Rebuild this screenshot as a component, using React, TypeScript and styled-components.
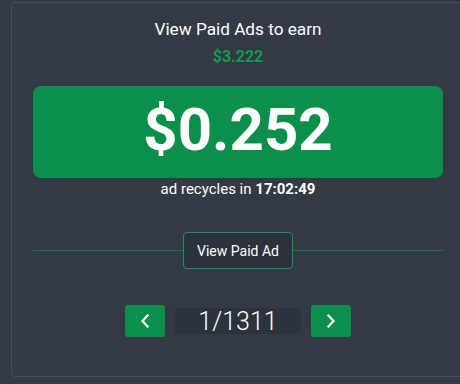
import styled, { createGlobalStyle } from 'styled-components';

const GlobalStyle = createGlobalStyle`
  html, body {
    margin: 0;
    padding: 0;
    background-color: #343a44;
    font-family: Roboto, "Liberation Sans", sans-serif;
    overflow: hidden;
  }
`;

const Panel = styled.div`
  box-sizing: border-box;
  width: 454px;
  height: 375px;
  margin: 2px 0 0 11px;
  padding: 15px 21px 0;
  border: 1px solid #464d58;
  border-radius: 4px;
  display: flex;
  flex-direction: column;
  align-items: stretch;
  color: #ffffff;
`;

const Title = styled.div`
  font-size: 17.2px;
  line-height: 22px;
  text-align: center;
`;

const Earn = styled.div`
  margin-top: 7px;
  font-size: 16px;
  line-height: 1.2;
  font-weight: 700;
  color: #0f9a50;
  text-align: center;
`;

const AmountBox = styled.div`
  margin-top: 20px;
  height: 92px;
  border-radius: 8px;
  background-color: #0c8f4a;
  display: flex;
  align-items: center;
  justify-content: center;
  padding-bottom: 4px;
  box-sizing: border-box;
`;

const Amount = styled.div`
  font-size: 60px;
  line-height: 1;
  font-weight: 700;
  color: #ffffff;
`;

const Recycle = styled.div`
  margin-top: 2px;
  font-size: 15px;
  line-height: 1.2;
  text-align: center;

  b {
    font-weight: 700;
  }
`;

const DividerRow = styled.div`
  margin-top: 34px;
  display: flex;
  align-items: center;
`;

const Line = styled.div`
  flex: 1;
  height: 1px;
  background-color: #1b7446;
`;

const ViewButton = styled.button`
  box-sizing: border-box;
  width: 110px;
  height: 37px;
  border: 1px solid #0e9a50;
  border-radius: 4px;
  background-color: #2c323b;
  color: #ffffff;
  font-family: inherit;
  font-size: 14px;
  cursor: pointer;
`;

const Pager = styled.div`
  margin-top: 36px;
  display: flex;
  align-items: center;
  justify-content: center;
  gap: 10px;
`;

const PageButton = styled.button`
  width: 40px;
  height: 32px;
  border: none;
  border-radius: 3px;
  background-color: #0c8f4a;
  display: flex;
  align-items: center;
  justify-content: center;
  padding: 0;
  cursor: pointer;
`;

const Counter = styled.div`
  width: 126px;
  height: 26px;
  border-radius: 3px;
  background-color: #2d333c;
  display: flex;
  align-items: center;
  justify-content: center;
  font-size: 25px;
  font-weight: 300;
  color: #ffffff;
`;

const Chevron = ({ dir }: { dir: 'left' | 'right' }) => (
  <svg width="10" height="14" viewBox="0 0 10 14" fill="none">
    <path
      d={dir === 'left' ? 'M7.5 1.5 L2.5 7 L7.5 12.5' : 'M2.5 1.5 L7.5 7 L2.5 12.5'}
      stroke="#ffffff"
      strokeWidth="2.2"
      strokeLinecap="square"
    />
  </svg>
);

export default function App() {
  return (
    <>
      <GlobalStyle />
      <Panel>
        <Title>View Paid Ads to earn</Title>
        <Earn>$3.222</Earn>
        <AmountBox>
          <Amount>$0.252</Amount>
        </AmountBox>
        <Recycle>
          ad recycles in <b>17:02:49</b>
        </Recycle>
        <DividerRow>
          <Line />
          <ViewButton>View Paid Ad</ViewButton>
          <Line />
        </DividerRow>
        <Pager>
          <PageButton>
            <Chevron dir="left" />
          </PageButton>
          <Counter>1/1311</Counter>
          <PageButton>
            <Chevron dir="right" />
          </PageButton>
        </Pager>
      </Panel>
    </>
  );
}
